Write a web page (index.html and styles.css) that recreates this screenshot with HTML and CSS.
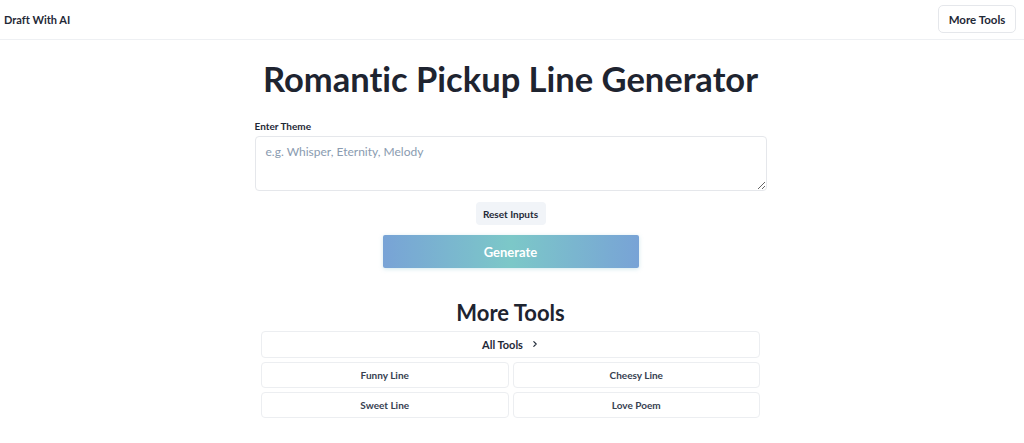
FILE: index.html
```html
<!DOCTYPE html>
<html lang="en">
<head>
<meta charset="utf-8">
<title>Romantic Pickup Line Generator</title>
<link rel="stylesheet" href="styles.css">
</head>
<body>
<header class="topbar">
  <a class="brand" href="#">Draft With AI</a>
  <button class="top-btn">More Tools</button>
</header>
<main class="main">
  <h1 class="title">Romantic Pickup Line Generator</h1>
  <form class="form">
    <label class="label" for="theme">Enter Theme</label>
    <textarea id="theme" class="input" placeholder="e.g. Whisper, Eternity, Melody"></textarea>
    <div class="actions">
      <button type="button" class="reset">Reset Inputs</button>
      <button type="button" class="generate">Generate</button>
    </div>
  </form>
  <section class="tools">
    <h2 class="tools-title">More Tools</h2>
    <div class="tool-grid">
      <a class="tool tool-all" href="#">All Tools
        <svg class="chev" viewBox="0 0 10 10" width="8" height="8"><path d="M3.5 2 L6.5 5 L3.5 8" fill="none" stroke="#1f2937" stroke-width="1.4" stroke-linecap="round" stroke-linejoin="round"/></svg>
      </a>
      <a class="tool" href="#">Funny Line</a>
      <a class="tool" href="#">Cheesy Line</a>
      <a class="tool" href="#">Sweet Line</a>
      <a class="tool" href="#">Love Poem</a>
    </div>
  </section>
</main>
</body>
</html>
```
FILE: styles.css
```css
* { box-sizing: border-box; }
html, body { margin: 0; padding: 0; background: #fff; }
body {
  font-family: Lato, "Noto Sans", sans-serif;
  font-variant-ligatures: none;
  color: #1f2937;
}
.topbar {
  height: 40px;
  display: flex;
  align-items: center;
  justify-content: space-between;
  padding: 0 8px 0 4px;
  border-bottom: 1px solid #eef0f3;
}
.brand {
  font-size: 11px;
  font-weight: 700;
  color: #1f2937;
  text-decoration: none;
}
.top-btn {
  font-family: inherit;
  font-variant-ligatures: none;
  font-size: 11.5px;
  font-weight: 700;
  color: #1f2937;
  background: #fff;
  border: 1px solid #e5e7eb;
  border-radius: 5px;
  height: 28px;
  width: 78px;
  padding: 0;
  margin-top: -1px;
}
.main {
  display: flex;
  flex-direction: column;
  align-items: center;
  padding-right: 3px;
}
.title {
  margin: 15px 0 0;
  font-size: 34.5px;
  font-weight: 700;
  color: #1e2430;
  line-height: 1.4;
}
.form {
  width: 512px;
  margin-top: 17px;
  display: flex;
  flex-direction: column;
}
.label {
  font-size: 10px;
  font-weight: 700;
  color: #1f2937;
  margin-bottom: 4px;
}
.input {
  height: 55px;
  border: 1px solid #e5e7eb;
  border-radius: 4px;
  padding: 7px 10px;
  font-family: inherit;
  font-size: 12px;
  resize: vertical;
}
.input::placeholder { color: #8a9bb0; }
.actions {
  display: flex;
  flex-direction: column;
  align-items: center;
  margin-top: 11px;
}
.reset {
  font-family: inherit;
  font-size: 10px;
  font-weight: 700;
  color: #1f2937;
  background: #f1f4f8;
  border: none;
  border-radius: 4px;
  height: 23px;
  width: 70px;
  padding: 0;
}
.generate {
  margin-top: 10px;
  width: 256px;
  height: 33px;
  border: none;
  border-radius: 2px;
  font-family: inherit;
  font-size: 13px;
  font-weight: 700;
  color: #fff;
  background: linear-gradient(90deg, #78a3d6 0%, #7cc8c8 50%, #78a3d6 100%);
  box-shadow: 0 1px 4px rgba(120, 190, 200, 0.35);
}
.tools {
  width: 499px;
  margin-top: 31px;
  display: flex;
  flex-direction: column;
  align-items: center;
}
.tools-title {
  margin: 0 0 3px;
  font-size: 22px;
  font-weight: 700;
  color: #1e2430;
  line-height: 1.3;
}
.tool-grid {
  width: 100%;
  display: grid;
  grid-template-columns: 1fr 1fr;
  gap: 4px;
}
.tool {
  height: 26px;
  display: flex;
  align-items: center;
  justify-content: center;
  border: 1px solid #eceef1;
  border-radius: 4px;
  font-size: 10px;
  font-weight: 700;
  color: #374151;
  text-decoration: none;
}
.tool-all {
  grid-column: 1 / 3;
  height: 27px;
  font-size: 11px;
  color: #1f2937;
}
.chev { margin-left: 8px; }
```
